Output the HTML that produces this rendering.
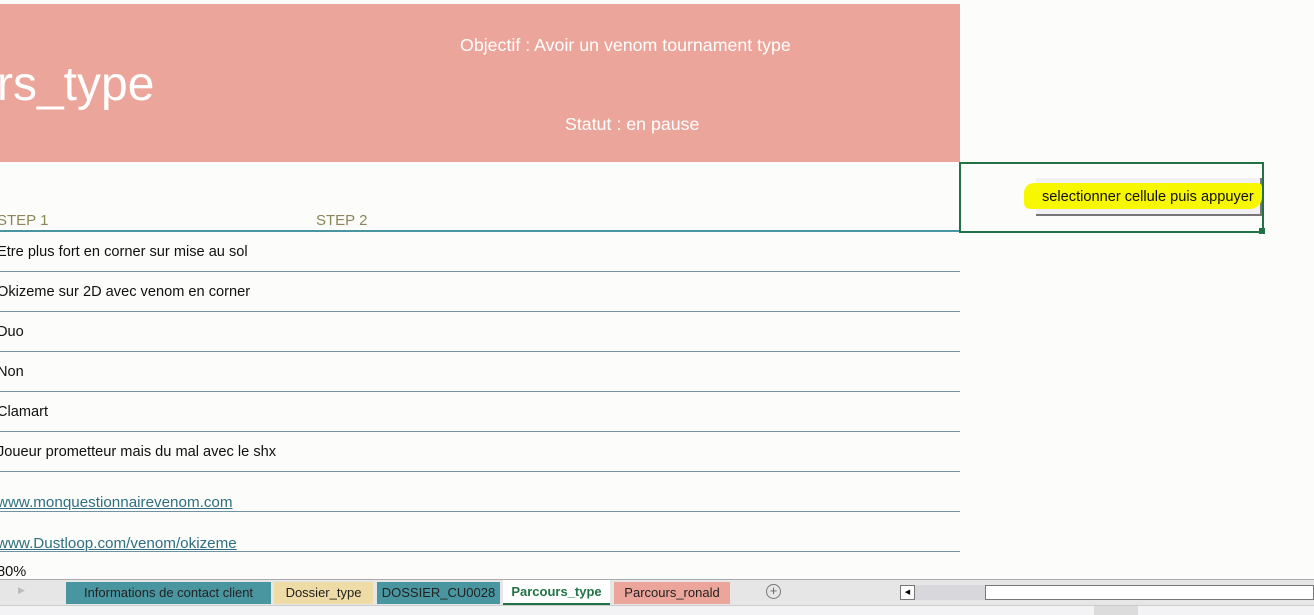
<!DOCTYPE html>
<html><head><style>
*{margin:0;padding:0;box-sizing:border-box}
body{width:1314px;height:615px;overflow:hidden;background:#fcfdfb;font-family:"Liberation Sans",Arial,sans-serif;position:relative}
.a{position:absolute;white-space:nowrap}
.hdr{left:0;top:4px;width:960px;height:158px;background:#eca59a}
.row{left:-3px;font-size:14.6px;color:#111}
.ln{left:0;width:960px;height:1px;background:#6f93a0}
.lk{color:#2f6f80;text-decoration:underline;font-size:15.2px}
.tab{position:absolute;top:582px;height:22px;font-size:13px;line-height:21px;text-align:center;color:#222}
</style></head><body>
<div class="a hdr"></div>
<div class="a" style="left:-3px;top:57px;font-size:48px;color:#fff">rs_type</div>
<div class="a" style="left:460px;top:35px;font-size:17.8px;color:#fff">Objectif : Avoir un venom tournament type</div>
<div class="a" style="left:565px;top:114px;font-size:17.8px;color:#fff">Statut : en pause</div>

<div class="a" style="left:-3px;top:212px;font-size:15px;color:#8b8656">STEP 1</div>
<div class="a" style="left:316px;top:212px;font-size:15px;color:#8b8656">STEP 2</div>
<div class="a" style="left:0;top:230px;width:960px;height:2px;background:#4a96a0"></div>

<div class="a" style="left:959px;top:162px;width:305px;height:71px;border:2px solid #217346"></div>
<div class="a" style="left:1259px;top:228px;width:6px;height:6px;background:#217346"></div>
<div class="a" style="left:1036px;top:178px;width:226px;height:38px;background:#f2f0f4;border-right:2px solid #777;border-bottom:2px solid #777"></div>
<div class="a" style="left:1024px;top:183px;width:238px;height:26px;background:#f7f700;border-radius:10px 4px 12px 6px"></div>
<div class="a" style="left:1042px;top:189px;font-size:14.6px;color:#111">selectionner cellule puis appuyer</div>

<div class="a row" style="top:244px">Etre plus fort en corner sur mise au sol</div>
<div class="a ln" style="top:271px"></div>
<div class="a row" style="top:284px">Okizeme sur 2D avec venom en corner</div>
<div class="a ln" style="top:311px"></div>
<div class="a row" style="top:324px">Duo</div>
<div class="a ln" style="top:351px"></div>
<div class="a row" style="top:364px">Non</div>
<div class="a ln" style="top:391px"></div>
<div class="a row" style="top:404px">Clamart</div>
<div class="a ln" style="top:431px"></div>
<div class="a row" style="top:444px">Joueur prometteur mais du mal avec le shx</div>
<div class="a ln" style="top:471px"></div>
<div class="a row lk" style="top:494px">www.monquestionnairevenom.com</div>
<div class="a ln" style="top:511px"></div>
<div class="a row lk" style="top:535px">www.Dustloop.com/venom/okizeme</div>
<div class="a ln" style="top:551px"></div>
<div class="a row" style="top:564px">80%</div>

<div class="a" style="left:0;top:579px;width:1314px;height:26px;background:#e6e6e6;border-top:1px solid #aaa"></div>
<div class="a" style="left:0;top:605px;width:1314px;height:10px;background:#f3f2f4;border-top:1px solid #ccc"></div>
<div class="a" style="left:18px;top:585px;font-size:9px;color:#bbb">▶</div>
<div class="tab" style="left:66px;width:205px;background:#4a96a0">Informations de contact client</div>
<div class="tab" style="left:274px;width:99px;background:#eedba6">Dossier_type</div>
<div class="tab" style="left:377px;width:123px;background:#4a96a0">DOSSIER_CU0028</div>
<div class="tab" style="left:503px;width:107px;background:#fff;font-weight:bold;color:#217346;border-bottom:2px solid #217346;top:580px;height:25px;line-height:24px">Parcours_type</div>
<div class="tab" style="left:614px;width:116px;background:#eca59a">Parcours_ronald</div>
<div class="a" style="left:766px;top:584px;width:15px;height:15px;border:1px solid #777;border-radius:50%;font-size:13px;line-height:12px;text-align:center;color:#666">+</div>
<div class="a" style="left:900px;top:585px;width:360px;height:15px;background:#d8d8dc"></div>
<div class="a" style="left:900px;top:585px;width:15px;height:15px;background:#fff;border:1px solid #777;font-size:7px;line-height:13px;text-align:center">◀</div>
<div class="a" style="left:985px;top:585px;width:329px;height:15px;background:#fff;border:1px solid #777"></div>
<div class="a" style="left:1094px;top:606px;width:44px;height:9px;background:#dcdcdc"></div>
</body></html>
